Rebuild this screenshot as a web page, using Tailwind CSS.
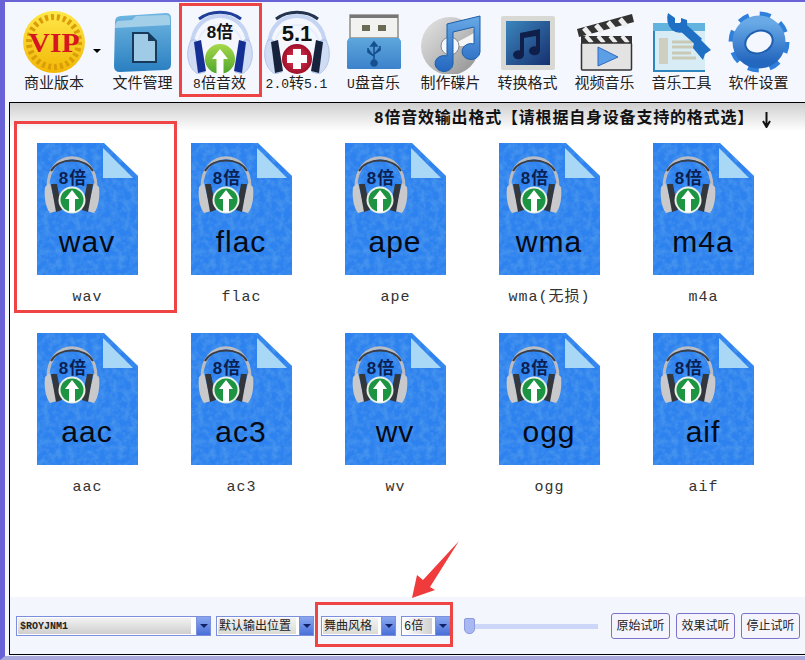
<!DOCTYPE html>
<html lang="en">
  <head>
    <meta charset="UTF-8" />
    <title>8倍音效</title>
    <script src="https://cdn.jsdelivr.net/npm/@tailwindcss/browser@4"></script>
  </head>
  <body class="w-[805px] h-[660px] overflow-hidden bg-[#f5f7fe] font-['Liberation_Mono','Noto_Sans_CJK_SC',monospace]">
    <svg width="0" height="0" class="absolute">
      <defs>
        <linearGradient id="gold" x1="0" y1="0" x2="0" y2="1"><stop offset="0" stop-color="#ffe84a"/><stop offset="1" stop-color="#f2b705"/></linearGradient>
        <linearGradient id="folder" x1="0" y1="0" x2="0" y2="1"><stop offset="0" stop-color="#6fb6e2"/><stop offset="1" stop-color="#2a7fc0"/></linearGradient>
        <linearGradient id="lime" x1="0" y1="0" x2="0" y2="1"><stop offset="0" stop-color="#a6d94a"/><stop offset="1" stop-color="#4fa52c"/></linearGradient>
        <linearGradient id="blueg" x1="0" y1="0" x2="0" y2="1"><stop offset="0" stop-color="#68a9e6"/><stop offset="1" stop-color="#2467bf"/></linearGradient>
        <linearGradient id="usb" x1="0" y1="0" x2="0" y2="1"><stop offset="0" stop-color="#5ea6dc"/><stop offset="1" stop-color="#3c82cb"/></linearGradient>
        <linearGradient id="silver" x1="0" y1="0" x2="1" y2="1"><stop offset="0" stop-color="#e6e6e6"/><stop offset=".5" stop-color="#bdbdbd"/><stop offset="1" stop-color="#8d8d8d"/></linearGradient>
        <linearGradient id="tile" x1="0" y1="0" x2="1" y2="1"><stop offset="0" stop-color="#3b86bd"/><stop offset="1" stop-color="#16306f"/></linearGradient>
        <radialGradient id="red51"><stop offset="0" stop-color="#f03a5a"/><stop offset="1" stop-color="#9c0f28"/></radialGradient>
        <filter id="mottle" x="0" y="0" width="100%" height="100%">
          <feTurbulence type="fractalNoise" baseFrequency="0.16" numOctaves="3" seed="4"/>
          <feColorMatrix values="0 0 0 0 0.1  0 0 0 0 0.38  0 0 0 0 0.85  0 0 0 1.1 -0.4"/>
          <feComposite in2="SourceAlpha" operator="in"/>
          <feMerge><feMergeNode in="SourceGraphic"/><feMergeNode/></feMerge>
        </filter>
        <symbol id="file" viewBox="0 0 101 132">
          <path d="M0 0H67L101 33V132H0Z" fill="#2f82ef" filter="url(#mottle)"/>
          <path d="M66 5L96 35H66Z" fill="#a9d8f7"/>
          <path d="M11 44C11 5 59 5 59 44" fill="none" stroke="#b9bcc2" stroke-width="3"/>
          <path d="M14 28C22 14 48 14 56 28" fill="none" stroke="#3a3d44" stroke-width="2"/>
          <path d="M13 40L8 44C7 52 8 64 13 70L20 68Z" fill="#c9c9cc"/>
          <path d="M14 41L20 41L25 67L19 69Z" fill="#33363b"/>
          <path d="M57 40L62 44C63 52 62 64 57 70L50 68Z" fill="#c9c9cc"/>
          <path d="M56 41L50 41L45 67L51 69Z" fill="#33363b"/>
          <circle cx="35" cy="57" r="13.5" fill="#e8f0e8"/>
          <circle cx="35" cy="57" r="11.5" fill="#1d9441"/>
          <path d="M35 47L42 56H38V69H32V56H28Z" fill="#fff"/>
          <text x="36" y="41" text-anchor="middle" font-size="17" font-weight="700" fill="#0a1f52" font-family="'Liberation Sans','Noto Sans CJK SC',sans-serif">8倍</text>
        </symbol>
        <symbol id="cans" viewBox="0 0 66 64">
          <path d="M5 36C5 -4 61 -4 61 36" fill="none" stroke="#c4d4f2" stroke-width="4"/>
          <path d="M11 36C11 8 55 8 55 36" fill="none" stroke="#e8eefb" stroke-width="2"/>
          <path d="M4 30C-2 42 0 58 11 64L18 62L9 30Z" fill="#cfdcf4" stroke="#9db4e2" stroke-width=".7"/>
          <path d="M62 30C68 42 66 58 55 64L48 62L57 30Z" fill="#cfdcf4" stroke="#9db4e2" stroke-width=".7"/>
        </symbol>
      </defs>
    </svg>

    <div class="relative w-[805px] h-[660px] flex flex-col border-t-2 border-l-[5px] border-t-[#6a63d8] border-l-[#6a63d8] border-b-[4px] border-b-[#a9a9dc] pl-1 pb-[1px]">
      <!-- Toolbar -->
      <div class="h-[100px] shrink-0 flex pl-[10px] text-[15px] leading-[18px] text-[#222]">
        <div class="w-[70px] flex flex-col items-center pt-[8px]">
          <svg width="64" height="64" viewBox="0 0 64 64">
            <circle cx="32" cy="32" r="31" fill="url(#gold)"/>
            <circle cx="32" cy="32" r="25" fill="none" stroke="#d99d08" stroke-width="6" stroke-dasharray="3 3"/>
            <text x="32" y="42" text-anchor="middle" font-family="'Liberation Serif',serif" font-weight="700" font-size="28" fill="#d5151f" textLength="51" lengthAdjust="spacingAndGlyphs">VIP</text>
          </svg>
          <span class="mt-[2px] whitespace-nowrap">商业版本</span>
        </div>
        <div class="w-[15px] pl-[4px] pt-[47px] shrink-0"><div class="w-0 h-0 border-x-[4px] border-x-transparent border-t-[4px] border-t-black"></div></div>
        <div class="w-[77px] flex flex-col items-center pt-[8px]">
          <svg width="62" height="64" viewBox="0 0 62 64">
            <path d="M3 12Q3 6 9 6L54 3Q59 3 59 8V54Q59 60 53 60L8 62Q2 62 2 56Z" fill="url(#folder)"/>
            <path d="M3 18L58 15V9Q58 5 54 5L24 6L20 10L6 11Q3 12 3 18Z" fill="#a3cfe9"/>
            <path d="M21 23H36L44 31V52H21Z" fill="#9fcbe6" stroke="#17395c" stroke-width="2"/>
            <path d="M36 23V31H44Z" fill="#17395c"/>
          </svg>
          <span class="mt-[2px] whitespace-nowrap">文件管理</span>
        </div>
        <div class="w-[77px] flex flex-col items-center pt-[8px]">
          <svg width="66" height="64" viewBox="0 0 66 64">
            <use href="#cans"/>
            <path d="M12 9C24 0 42 0 54 9" fill="none" stroke="#1f3f9a" stroke-width="3"/>
            <path d="M7 32L14 30L19 61L11 63Z" fill="#142f93"/>
            <path d="M59 32L52 30L47 61L55 63Z" fill="#142f93"/>
            <circle cx="33" cy="49" r="15" fill="url(#lime)"/>
            <path d="M33 39L41 49H36.500V64H29.500V49H25Z" fill="#fff"/>
            <text x="33" y="28" text-anchor="middle" font-size="17" font-weight="700" fill="#111" font-family="'Liberation Sans','Noto Sans CJK SC',sans-serif">8倍</text>
          </svg>
          <span class="mt-[2px] whitespace-nowrap"><span class="text-[13px]">8</span>倍音效</span>
        </div>
        <div class="w-[77px] flex flex-col items-center pt-[8px]">
          <svg width="66" height="64" viewBox="0 0 66 64">
            <use href="#cans"/>
            <path d="M12 9C24 0 42 0 54 9" fill="none" stroke="#23344f" stroke-width="3"/>
            <path d="M7 32L14 30L19 61L11 63Z" fill="#17233d"/>
            <path d="M59 32L52 30L47 61L55 63Z" fill="#17233d"/>
            <circle cx="33" cy="49" r="15" fill="url(#red51)"/>
            <path d="M29 39H37V45H43V53H37V59H29V53H23V45H29Z" fill="#fff"/>
            <text x="33" y="31" text-anchor="middle" font-size="22" font-weight="700" fill="#111" font-family="'Liberation Sans',sans-serif">5.1</text>
          </svg>
          <span class="mt-[2px] whitespace-nowrap"><span class="text-[13px]">2.0</span>转<span class="text-[13px]">5.1</span></span>
        </div>
        <div class="w-[77px] flex flex-col items-center pt-[8px]">
          <svg width="56" height="64" viewBox="0 0 56 64">
            <path d="M4 5H52V28H4Z" fill="#f2f2f0" stroke="#8d8d88" stroke-width="1.500"/>
            <path d="M4 5H52V8H4Z" fill="#777"/>
            <path d="M16 15H24V21H16ZM32 15H40V21H32Z" fill="#6a6a55"/>
            <path d="M3 28H53L55 31V58Q55 59 53 59H3Q1 59 1 58V31Z" fill="url(#usb)"/>
            <path d="M28 32V50M28 50a3 3 0 1 0 .1 0M28 32l-3 4h6ZM22 38v4l6 4M34 36v4l-6 4" fill="#16508f" stroke="#16508f" stroke-width="1.600"/>
          </svg>
          <span class="mt-[2px] whitespace-nowrap"><span class="text-[13px]">U</span>盘音乐</span>
        </div>
        <div class="w-[77px] flex flex-col items-center pt-[8px]">
          <svg width="62" height="64" viewBox="0 0 62 64">
            <circle cx="30" cy="36" r="29" fill="url(#silver)"/>
            <path d="M30 36L56 22A29 29 0 0 1 58 36Z" fill="#f5f5f5"/>
            <circle cx="30" cy="36" r="9" fill="#f5f7fe" stroke="#888"/>
            <path d="M27 14L60 6V42A9 8 0 1 1 54 34V17L33 22V54A9 8 0 1 1 27 46Z" fill="url(#blueg)" stroke="#1d5ea8"/>
          </svg>
          <span class="mt-[2px] whitespace-nowrap">制作碟片</span>
        </div>
        <div class="w-[77px] flex flex-col items-center pt-[8px]">
          <svg width="56" height="64" viewBox="0 0 56 64">
            <rect x="1" y="6" width="54" height="54" rx="2" fill="#d8d8d4"/>
            <rect x="6" y="11" width="44" height="44" fill="url(#tile)"/>
            <path d="M20 23L40 19V41A5.500 4.500 0 1 1 36 36.500V26L24 28V45A5.500 4.500 0 1 1 20 40.500Z" fill="#0f1f4a"/>
          </svg>
          <span class="mt-[2px] whitespace-nowrap">转换格式</span>
        </div>
        <div class="w-[77px] flex flex-col items-center pt-[8px]">
          <svg width="58" height="64" viewBox="0 0 58 64">
            <path d="M1 19L56 4L58 12L3 27Z" fill="#333"/>
            <path d="M8 18L14 25M20 15L26 22M32 12L38 19M44 9L50 16" stroke="#eee" stroke-width="5"/>
            <rect x="5" y="26" width="51" height="7" fill="#333"/>
            <path d="M10 26L16 33M22 26L28 33M34 26L40 33M46 26L52 33" stroke="#eee" stroke-width="4"/>
            <rect x="5.500" y="33" width="50" height="27" rx="1" fill="#e3e3e3" stroke="#333" stroke-width="1.500"/>
            <path d="M22 37L42 47L22 56Z" fill="#5d9fe6" stroke="#2c6ac0"/>
          </svg>
          <span class="mt-[2px] whitespace-nowrap">视频音乐</span>
        </div>
        <div class="w-[77px] flex flex-col items-center pt-[8px]">
          <svg width="62" height="64" viewBox="0 0 62 64">
            <rect x="2" y="13" width="52" height="49" fill="#d8ecf6"/>
            <path d="M2 13H54V21H2Z" fill="#62b3dd"/>
            <path d="M2 21H4V62H2ZM4 60H54V62H4Z" fill="#2e86c0"/>
            <path d="M8 28H17V54H8Z" fill="#cfcfbf"/>
            <path d="M21 32H45M21 37H45M21 43H40M21 48H45" stroke="#c9c9b5" stroke-width="3"/>
            <path d="M28 14L48 32" stroke="#1f6fc4" stroke-width="9"/>
            <path d="M17 3L24 8L24 13L30 13L30 8L36 10Q37 18 33 22Q26 24 21 20Q14 12 17 3Z" fill="#1f6fc4"/>
            <path d="M44 28L50 30L60 40L54 44L52 50L42 38Z" fill="#1f6fc4"/>
          </svg>
          <span class="mt-[2px] whitespace-nowrap">音乐工具</span>
        </div>
        <div class="w-[77px] flex flex-col items-center pt-[8px]">
          <svg width="62" height="64" viewBox="0 0 62 64">
            <circle cx="31" cy="32" r="26" fill="none" stroke="#2f7fdc" stroke-width="9" stroke-dasharray="10.200 10.200"/>
            <circle cx="31" cy="32" r="19" fill="none" stroke="url(#blueg)" stroke-width="15"/>
            <ellipse cx="31" cy="32" rx="14" ry="11" transform="rotate(-20 31 32)" fill="#f5f7fe" stroke="#1f5fb0" stroke-width="2"/>
          </svg>
          <span class="mt-[2px] whitespace-nowrap">软件设置</span>
        </div>
      </div>

      <!-- Content panel -->
      <div class="flex-1 min-h-0 flex flex-col border-t border-l border-b border-black bg-white">
        <div class="h-[28px] shrink-0 bg-linear-to-b from-[#cfcfcf] to-white flex justify-end items-start pr-[34px] pt-[6px] text-[16px] tracking-[0.8px] leading-[20px] font-bold text-[#111] whitespace-nowrap">
          <span>8倍音效输出格式【请根据自身设备支持的格式选】</span>
          <svg class="ml-[8px] mt-[3px]" width="9" height="16" viewBox="0 0 9 16"><path d="M4.500 0V13M1 9L4.500 15L8 9" fill="none" stroke="#111" stroke-width="2"/></svg>
        </div>
        <div class="flex-1 grid grid-cols-[repeat(5,154px)] auto-rows-[190px] pl-[27px] pt-[12px] text-[15px] tracking-[1px] text-[#333] text-center">
          <div class="w-[101px] flex flex-col items-center"><svg width="101" height="132"><use href="#file"/><text x="50" y="109" text-anchor="middle" font-size="30" fill="#050a14" font-family="'Liberation Sans',sans-serif">wav</text></svg><span class="mt-[14px] leading-[18px] whitespace-nowrap">wav</span></div>
          <div class="w-[101px] flex flex-col items-center"><svg width="101" height="132"><use href="#file"/><text x="50" y="109" text-anchor="middle" font-size="30" fill="#050a14" font-family="'Liberation Sans',sans-serif">flac</text></svg><span class="mt-[14px] leading-[18px] whitespace-nowrap">flac</span></div>
          <div class="w-[101px] flex flex-col items-center"><svg width="101" height="132"><use href="#file"/><text x="50" y="109" text-anchor="middle" font-size="30" fill="#050a14" font-family="'Liberation Sans',sans-serif">ape</text></svg><span class="mt-[14px] leading-[18px] whitespace-nowrap">ape</span></div>
          <div class="w-[101px] flex flex-col items-center"><svg width="101" height="132"><use href="#file"/><text x="50" y="109" text-anchor="middle" font-size="30" fill="#050a14" font-family="'Liberation Sans',sans-serif">wma</text></svg><span class="mt-[14px] leading-[18px] whitespace-nowrap">wma(无损)</span></div>
          <div class="w-[101px] flex flex-col items-center"><svg width="101" height="132"><use href="#file"/><text x="50" y="109" text-anchor="middle" font-size="30" fill="#050a14" font-family="'Liberation Sans',sans-serif">m4a</text></svg><span class="mt-[14px] leading-[18px] whitespace-nowrap">m4a</span></div>
          <div class="w-[101px] flex flex-col items-center"><svg width="101" height="132"><use href="#file"/><text x="50" y="109" text-anchor="middle" font-size="30" fill="#050a14" font-family="'Liberation Sans',sans-serif">aac</text></svg><span class="mt-[14px] leading-[18px] whitespace-nowrap">aac</span></div>
          <div class="w-[101px] flex flex-col items-center"><svg width="101" height="132"><use href="#file"/><text x="50" y="109" text-anchor="middle" font-size="30" fill="#050a14" font-family="'Liberation Sans',sans-serif">ac3</text></svg><span class="mt-[14px] leading-[18px] whitespace-nowrap">ac3</span></div>
          <div class="w-[101px] flex flex-col items-center"><svg width="101" height="132"><use href="#file"/><text x="50" y="109" text-anchor="middle" font-size="30" fill="#050a14" font-family="'Liberation Sans',sans-serif">wv</text></svg><span class="mt-[14px] leading-[18px] whitespace-nowrap">wv</span></div>
          <div class="w-[101px] flex flex-col items-center"><svg width="101" height="132"><use href="#file"/><text x="50" y="109" text-anchor="middle" font-size="30" fill="#050a14" font-family="'Liberation Sans',sans-serif">ogg</text></svg><span class="mt-[14px] leading-[18px] whitespace-nowrap">ogg</span></div>
          <div class="w-[101px] flex flex-col items-center"><svg width="101" height="132"><use href="#file"/><text x="50" y="109" text-anchor="middle" font-size="30" fill="#050a14" font-family="'Liberation Sans',sans-serif">aif</text></svg><span class="mt-[14px] leading-[18px] whitespace-nowrap">aif</span></div>
        </div>

        <!-- Bottom bar -->
        <div class="h-[57px] shrink-0 bg-[#f4f6fd] flex items-start pt-[19px] pl-[6px] text-[12px] leading-[18px] text-[#222]">
          <div class="w-[195px] h-[20px] flex border border-[#7c8fdc] bg-white p-[1px] pr-0">
            <span class="flex-1 bg-linear-to-b from-[#f2f2f2] to-[#cfcfcf] mr-[5px] pl-[2px] text-[10px] font-bold whitespace-nowrap">$ROYJNM1</span>
            <span class="w-[14px] -my-[1px] bg-linear-to-b from-[#8ba8ef] to-[#4a6fd8] border-l border-[#7c8fdc] flex items-center justify-center"><span class="w-0 h-0 border-x-[4px] border-x-transparent border-t-[4px] border-t-[#12226a]"></span></span>
          </div>
          <div class="w-[98px] ml-[5px] h-[20px] flex border border-[#7c8fdc] bg-white p-[1px] pr-0">
            <span class="flex-1 bg-linear-to-b from-[#f2f2f2] to-[#dcdcd4] mr-[3px] pl-[1px] whitespace-nowrap overflow-hidden">默认输出位置</span>
            <span class="w-[14px] -my-[1px] bg-linear-to-b from-[#8ba8ef] to-[#4a6fd8] border-l border-[#7c8fdc] flex items-center justify-center"><span class="w-0 h-0 border-x-[4px] border-x-transparent border-t-[4px] border-t-[#12226a]"></span></span>
          </div>
          <div class="w-[75px] ml-[7px] h-[20px] flex border border-[#7c8fdc] bg-white p-[1px] pr-0">
            <span class="flex-1 bg-linear-to-b from-[#f2f2f2] to-[#dcdcd4] mr-[3px] pl-[1px] whitespace-nowrap overflow-hidden">舞曲风格</span>
            <span class="w-[14px] -my-[1px] bg-linear-to-b from-[#8ba8ef] to-[#4a6fd8] border-l border-[#7c8fdc] flex items-center justify-center"><span class="w-0 h-0 border-x-[4px] border-x-transparent border-t-[4px] border-t-[#12226a]"></span></span>
          </div>
          <div class="w-[50px] ml-[5px] h-[20px] flex border border-[#7c8fdc] bg-white p-[1px] pr-0">
            <span class="flex-1 bg-linear-to-r from-white to-[#d0d0d0] mr-[3px] pl-[1px] whitespace-nowrap overflow-hidden">6倍</span>
            <span class="w-[15px] -my-[1px] bg-linear-to-b from-[#8ba8ef] to-[#4a6fd8] border-l border-[#7c8fdc] flex items-center justify-center"><span class="w-0 h-0 border-x-[4px] border-x-transparent border-t-[4px] border-t-[#12226a]"></span></span>
          </div>
          <!-- Slider -->
          <div class="w-[134px] ml-[13px] h-[20px] flex items-center">
            <span class="w-[11px] h-[16px] shrink-0 bg-[#aab8f2] border border-[#8b9be0] rounded-b-[5px] rounded-t-[2px]"></span>
            <span class="flex-1 h-[5px] bg-[#ccd6f8]"></span>
          </div>
          <div class="-mt-[3px] ml-[13px] flex gap-[6px]">
            <button class="w-[59px] h-[26px] pt-[2px] bg-[#f5f4fd] border border-[#7a73c8] rounded-[3px] whitespace-nowrap">原始试听</button>
            <button class="w-[59px] h-[26px] pt-[2px] bg-[#f5f4fd] border border-[#7a73c8] rounded-[3px] whitespace-nowrap">效果试听</button>
            <button class="w-[59px] h-[26px] pt-[2px] bg-[#f5f4fd] border border-[#7a73c8] rounded-[3px] whitespace-nowrap">停止试听</button>
          </div>
        </div>
      </div>

      <!-- Red annotations over the screenshot -->
      <div class="absolute left-[174px] top-[1px] w-[83px] h-[94px] border-[3px] border-[#ef4444]"></div>
      <div class="absolute left-[9px] top-[119px] w-[163px] h-[192px] border-[3px] border-[#ef4444]"></div>
      <div class="absolute left-[310px] top-[600px] w-[138px] h-[45px] border-[3px] border-[#ef4444]"></div>
      <svg class="absolute left-[405px] top-[538px]" width="60" height="72" viewBox="0 0 60 72">
        <path d="M49 1L13 40L7 35L2 58L25 50L20 47Z" fill="#ef3b3b"/>
      </svg>
    </div>
  </body>
</html>
